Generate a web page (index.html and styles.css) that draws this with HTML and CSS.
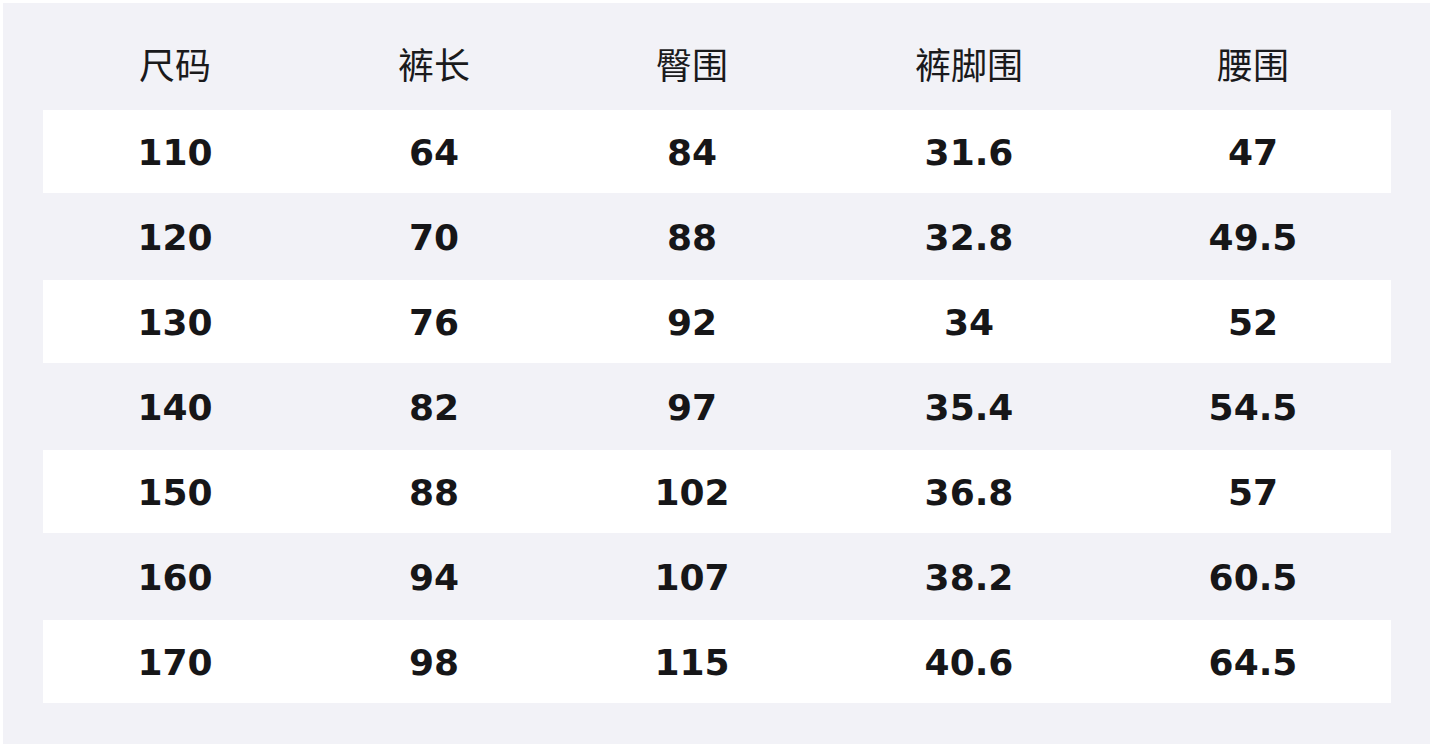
FILE: index.html
```html
<!DOCTYPE html>
<html lang="zh">
<head>
<meta charset="utf-8">
<title>尺码表</title>
<link rel="stylesheet" href="styles.css">
</head>
<body>
<div class="panel">
  <table class="size-table">
    <colgroup>
      <col class="c1"><col class="c2"><col class="c3"><col class="c4"><col class="c5">
    </colgroup>
    <thead>
      <tr><th>尺码</th><th>裤长</th><th>臀围</th><th>裤脚围</th><th>腰围</th></tr>
    </thead>
    <tbody>
      <tr><td>110</td><td>64</td><td>84</td><td>31.6</td><td>47</td></tr>
      <tr><td>120</td><td>70</td><td>88</td><td>32.8</td><td>49.5</td></tr>
      <tr><td>130</td><td>76</td><td>92</td><td>34</td><td>52</td></tr>
      <tr><td>140</td><td>82</td><td>97</td><td>35.4</td><td>54.5</td></tr>
      <tr><td>150</td><td>88</td><td>102</td><td>36.8</td><td>57</td></tr>
      <tr><td>160</td><td>94</td><td>107</td><td>38.2</td><td>60.5</td></tr>
      <tr><td>170</td><td>98</td><td>115</td><td>40.6</td><td>64.5</td></tr>
    </tbody>
  </table>
</div>
</body>
</html>
```
FILE: styles.css
```css
html, body {
  margin: 0;
  padding: 0;
  background: #ffffff;
}
body {
  padding: 3px 4px 4px 3px;
  font-family: "DejaVu Sans", "Noto Sans CJK SC", sans-serif;
  color: #161618;
}
.panel {
  width: 1427px;
  height: 741px;
  box-sizing: border-box;
  background: #f2f2f7;
  padding: 22px 39px 41px 40px;
}
.size-table {
  width: 1348px;
  border-collapse: collapse;
  table-layout: fixed;
}
.c1 { width: 264px; }
.c2 { width: 254px; }
.c3 { width: 262px; }
.c4 { width: 292px; }
.c5 { width: 276px; }
.size-table th {
  height: 85px;
  box-sizing: border-box;
  padding: 0 0 9px 0;
  font-family: "Noto Sans CJK SC", sans-serif;
  font-weight: 400;
  font-size: 36px;
  text-align: center;
  vertical-align: middle;
  color: #1a1a1c;
}
.size-table td {
  height: 85px;
  padding: 0 0 1px 0;
  box-sizing: border-box;
  font-weight: 700;
  font-size: 36px;
  text-align: center;
  vertical-align: middle;
}
.size-table tbody tr:nth-child(odd) td {
  background: linear-gradient(to bottom, #ffffff 0, #ffffff 83px, transparent 83px);
}
```
